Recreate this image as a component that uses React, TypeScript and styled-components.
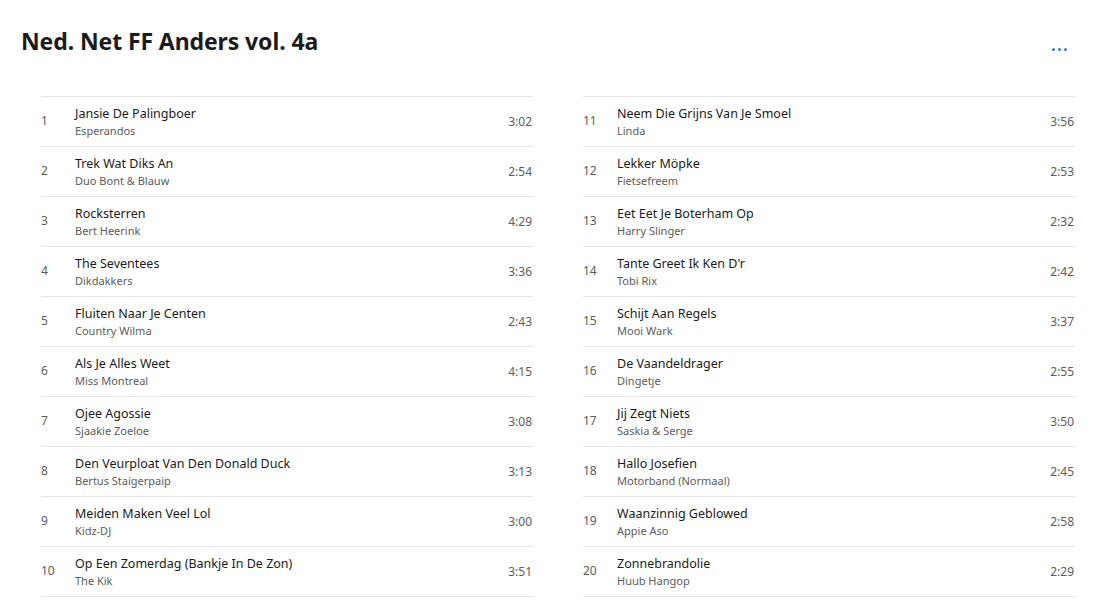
import React from 'react';
import styled, { createGlobalStyle } from 'styled-components';

const GlobalStyle = createGlobalStyle`
  body {
    margin: 0;
    background: #ffffff;
    font-family: 'Noto Sans', 'Open Sans', sans-serif;
  }
`;

const Page = styled.div`
  width: 1112px;
  height: 600px;
  overflow: hidden;
  background: #ffffff;
`;

const Header = styled.header`
  display: flex;
  justify-content: space-between;
  align-items: flex-start;
  padding: 26px 37px 0 21px;
  height: 70px;
  box-sizing: border-box;
`;

const Title = styled.h1`
  margin: 0;
  font-size: 23px;
  font-weight: 700;
  color: #1b1b1b;
  letter-spacing: -0.1px;
  line-height: 30px;
`;

const MoreButton = styled.button`
  display: flex;
  gap: 3px;
  align-items: center;
  border: none;
  background: transparent;
  padding: 0;
  margin-top: 22px;
  margin-right: 8px;
  cursor: pointer;
`;

const Dot = styled.span`
  width: 3px;
  height: 3px;
  border-radius: 50%;
  background: #2f7bd8;
`;

const Columns = styled.div`
  display: grid;
  grid-template-columns: 492px 492px;
  column-gap: 50px;
  padding: 26px 0 0 41px;
`;

const TrackList = styled.ol`
  list-style: none;
  margin: 0;
  padding: 0;
  border-top: 1px solid #e6e6e6;
`;

const Row = styled.li`
  display: flex;
  align-items: center;
  height: 49px;
  border-bottom: 1px solid #e6e6e6;
`;

const Num = styled.span`
  width: 34px;
  font-size: 12px;
  color: #5c5c5c;
  margin-top: -2px;
`;

const Info = styled.div`
  flex: 1;
  display: flex;
  flex-direction: column;
`;

const Song = styled.span`
  font-size: 12.5px;
  color: #1b1b1b;
  line-height: 17px;
`;

const Artist = styled.span`
  font-size: 11px;
  color: #5c5c5c;
  line-height: 17px;
`;

const Duration = styled.span`
  font-size: 12px;
  color: #5c5c5c;
  padding-right: 1px;
  margin-top: -1px;
`;

type Track = { n: number; title: string; artist: string; time: string };

const tracks: Track[] = [
  { n: 1, title: 'Jansie De Palingboer', artist: 'Esperandos', time: '3:02' },
  { n: 2, title: 'Trek Wat Diks An', artist: 'Duo Bont & Blauw', time: '2:54' },
  { n: 3, title: 'Rocksterren', artist: 'Bert Heerink', time: '4:29' },
  { n: 4, title: 'The Seventees', artist: 'Dikdakkers', time: '3:36' },
  { n: 5, title: 'Fluiten Naar Je Centen', artist: 'Country Wilma', time: '2:43' },
  { n: 6, title: 'Als Je Alles Weet', artist: 'Miss Montreal', time: '4:15' },
  { n: 7, title: 'Ojee Agossie', artist: 'Sjaakie Zoeloe', time: '3:08' },
  { n: 8, title: 'Den Veurploat Van Den Donald Duck', artist: 'Bertus Staigerpaip', time: '3:13' },
  { n: 9, title: 'Meiden Maken Veel Lol', artist: 'Kidz-DJ', time: '3:00' },
  { n: 10, title: 'Op Een Zomerdag (Bankje In De Zon)', artist: 'The Kik', time: '3:51' },
  { n: 11, title: 'Neem Die Grijns Van Je Smoel', artist: 'Linda', time: '3:56' },
  { n: 12, title: 'Lekker Möpke', artist: 'Fietsefreem', time: '2:53' },
  { n: 13, title: 'Eet Eet Je Boterham Op', artist: 'Harry Slinger', time: '2:32' },
  { n: 14, title: "Tante Greet Ik Ken D'r", artist: 'Tobi Rix', time: '2:42' },
  { n: 15, title: 'Schijt Aan Regels', artist: 'Mooi Wark', time: '3:37' },
  { n: 16, title: 'De Vaandeldrager', artist: 'Dingetje', time: '2:55' },
  { n: 17, title: 'Jij Zegt Niets', artist: 'Saskia & Serge', time: '3:50' },
  { n: 18, title: 'Hallo Josefien', artist: 'Motorband (Normaal)', time: '2:45' },
  { n: 19, title: 'Waanzinnig Geblowed', artist: 'Appie Aso', time: '2:58' },
  { n: 20, title: 'Zonnebrandolie', artist: 'Huub Hangop', time: '2:29' },
];

function TrackColumn({ items }: { items: Track[] }) {
  return (
    <TrackList>
      {items.map((t) => (
        <Row key={t.n}>
          <Num>{t.n}</Num>
          <Info>
            <Song>{t.title}</Song>
            <Artist>{t.artist}</Artist>
          </Info>
          <Duration>{t.time}</Duration>
        </Row>
      ))}
    </TrackList>
  );
}

export default function App() {
  return (
    <Page>
      <GlobalStyle />
      <Header>
        <Title>Ned. Net FF Anders vol. 4a</Title>
        <MoreButton aria-label="Meer">
          <Dot />
          <Dot />
          <Dot />
        </MoreButton>
      </Header>
      <Columns>
        <TrackColumn items={tracks.slice(0, 10)} />
        <TrackColumn items={tracks.slice(10)} />
      </Columns>
    </Page>
  );
}
